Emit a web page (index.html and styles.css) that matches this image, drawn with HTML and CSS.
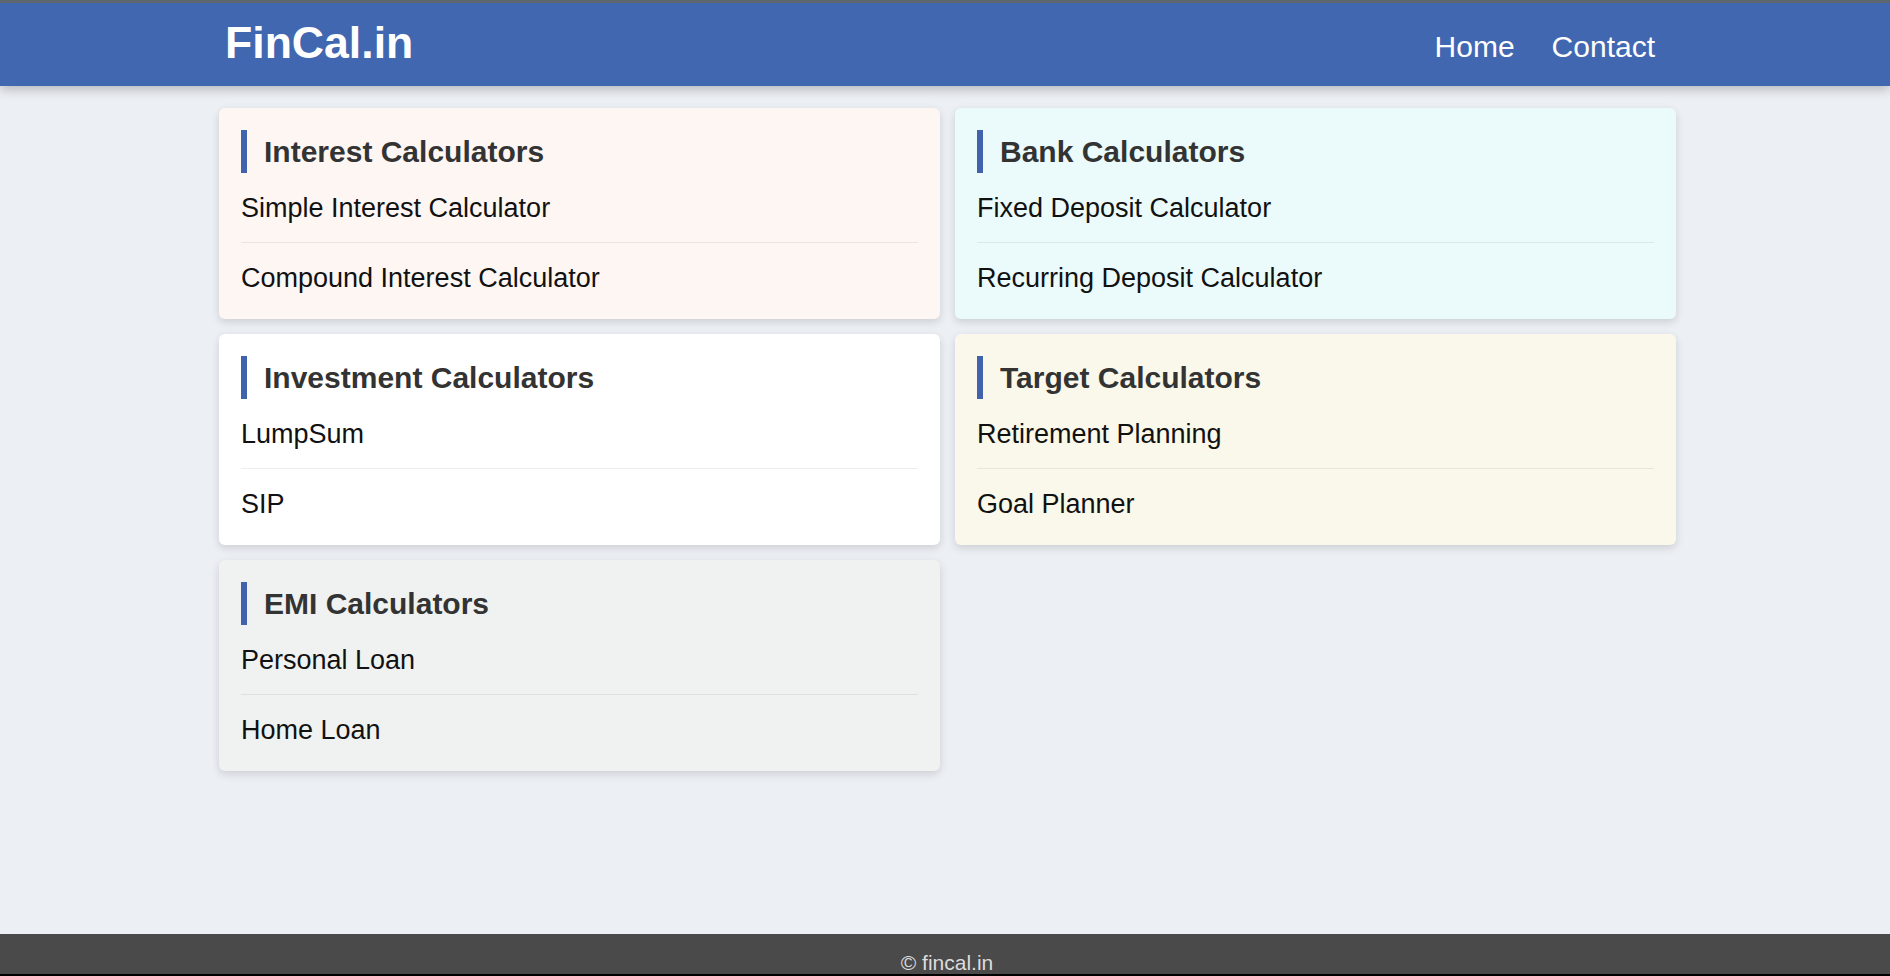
FILE: index.html
```html
<!DOCTYPE html>
<html lang="en">
<head>
<meta charset="utf-8">
<title>FinCal.in</title>
<link rel="stylesheet" href="styles.css">
</head>
<body>
<header class="topbar">
  <div class="topbar-inner">
    <a class="logo" href="#">FinCal.in</a>
    <nav class="nav">
      <a href="#">Home</a>
      <a href="#">Contact</a>
    </nav>
  </div>
</header>
<main class="main">
  <div class="grid">
    <section class="card card-pink">
      <h2 class="card-title">Interest Calculators</h2>
      <a class="card-link" href="#">Simple Interest Calculator</a>
      <a class="card-link" href="#">Compound Interest Calculator</a>
    </section>
    <section class="card card-cyan">
      <h2 class="card-title">Bank Calculators</h2>
      <a class="card-link" href="#">Fixed Deposit Calculator</a>
      <a class="card-link" href="#">Recurring Deposit Calculator</a>
    </section>
    <section class="card card-white">
      <h2 class="card-title">Investment Calculators</h2>
      <a class="card-link" href="#">LumpSum</a>
      <a class="card-link" href="#">SIP</a>
    </section>
    <section class="card card-yellow">
      <h2 class="card-title">Target Calculators</h2>
      <a class="card-link" href="#">Retirement Planning</a>
      <a class="card-link" href="#">Goal Planner</a>
    </section>
    <section class="card card-grey">
      <h2 class="card-title">EMI Calculators</h2>
      <a class="card-link" href="#">Personal Loan</a>
      <a class="card-link" href="#">Home Loan</a>
    </section>
  </div>
</main>
<footer class="footer">© fincal.in</footer>
</body>
</html>
```
FILE: styles.css
```css
html {
  background: #000;
}
body {
  margin: 0;
  height: 974px;
  display: flex;
  flex-direction: column;
  background: #eceff4;
  font-family: "Liberation Sans", Arial, sans-serif;
  overflow: hidden;
}
a {
  text-decoration: none;
}
.topbar {
  border-top: 3px solid #5d6770;
  background: #4167b1;
  box-shadow: 0 4px 10px rgba(0, 0, 0, 0.22);
  position: relative;
  z-index: 1;
}
.topbar-inner {
  height: 83px;
  display: flex;
  align-items: center;
  justify-content: space-between;
  padding: 0 235px 0 225px;
}
.logo {
  color: #fff;
  font-size: 44.6px;
  font-weight: bold;
  margin-bottom: 4px;
}
.nav {
  display: flex;
  gap: 37px;
  margin-top: 4px;
}
.nav a {
  color: #fff;
  font-size: 30px;
}
.main {
  flex: 1;
  padding: 22px 0 0 219px;
}
.grid {
  width: 1457px;
  display: grid;
  grid-template-columns: 721px 721px;
  gap: 15px;
  align-items: start;
}
.card {
  border-radius: 6px;
  padding: 22px 22px 7px 22px;
  box-shadow: 0 3px 8px rgba(0, 0, 0, 0.14);
  display: flex;
  flex-direction: column;
}
.card-pink { background: #fdf6f3; }
.card-cyan { background: #ebfafa; }
.card-white { background: #ffffff; }
.card-yellow { background: #faf8ea; }
.card-grey { background: #eff2f1; }
.card-title {
  margin: 0 0 1px 0;
  border-left: 6px solid #4163ad;
  padding-left: 17px;
  height: 43px;
  line-height: 43px;
  font-size: 30px;
  font-weight: bold;
  color: #333;
}
.card-link {
  color: #111;
  font-size: 27px;
  line-height: 32px;
  padding: 18px 0;
}
.card-link + .card-link {
  border-top: 1px solid rgba(0, 0, 0, 0.07);
  padding-top: 19px;
}
.footer {
  height: 40px;
  overflow: hidden;
  background: #4a4a4a;
  color: #dcdcdc;
  text-align: center;
  font-size: 21px;
  line-height: 24px;
  padding-top: 17px;
  box-sizing: border-box;
  padding-left: 4px;
}
```
